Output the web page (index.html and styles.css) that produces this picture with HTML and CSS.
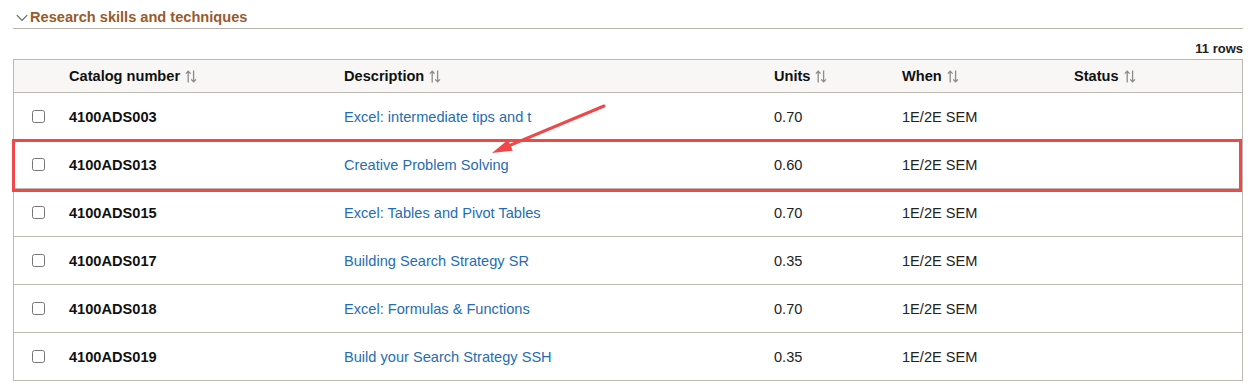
FILE: index.html
```html
<!DOCTYPE html>
<html lang="en">
<head>
<meta charset="utf-8">
<title>Research skills and techniques</title>
<link rel="stylesheet" href="styles.css">
</head>
<body>
<div class="page">
  <div class="section-head">
    <svg class="chev" width="12" height="8" viewBox="0 0 12 8"><polyline points="0.8,1.2 6,6.4 11.2,1.2" fill="none" stroke="#666" stroke-width="1.2"/></svg>
    <span class="section-title">Research skills and techniques</span>
  </div>
  <div class="rowcount">11 rows</div>
  <div class="table">
    <div class="row head">
      <div class="cell"></div>
      <div class="cell">Catalog number <svg class="sort" width="12" height="13" viewBox="0 0 12 13"><path d="M3.2 12.5V1.2M0.8 3.6L3.2 1.2L5.6 3.6M8.6 0.6V11.8M6.2 9.4L8.6 11.8L11 9.4" fill="none" stroke="#8c8c8c" stroke-width="1.3"/></svg></div>
      <div class="cell">Description <svg class="sort" width="12" height="13" viewBox="0 0 12 13"><path d="M3.2 12.5V1.2M0.8 3.6L3.2 1.2L5.6 3.6M8.6 0.6V11.8M6.2 9.4L8.6 11.8L11 9.4" fill="none" stroke="#8c8c8c" stroke-width="1.3"/></svg></div>
      <div class="cell">Units <svg class="sort" width="12" height="13" viewBox="0 0 12 13"><path d="M3.2 12.5V1.2M0.8 3.6L3.2 1.2L5.6 3.6M8.6 0.6V11.8M6.2 9.4L8.6 11.8L11 9.4" fill="none" stroke="#8c8c8c" stroke-width="1.3"/></svg></div>
      <div class="cell">When <svg class="sort" width="12" height="13" viewBox="0 0 12 13"><path d="M3.2 12.5V1.2M0.8 3.6L3.2 1.2L5.6 3.6M8.6 0.6V11.8M6.2 9.4L8.6 11.8L11 9.4" fill="none" stroke="#8c8c8c" stroke-width="1.3"/></svg></div>
      <div class="cell">Status <svg class="sort" width="12" height="13" viewBox="0 0 12 13"><path d="M3.2 12.5V1.2M0.8 3.6L3.2 1.2L5.6 3.6M8.6 0.6V11.8M6.2 9.4L8.6 11.8L11 9.4" fill="none" stroke="#8c8c8c" stroke-width="1.3"/></svg></div>
    </div>
    <div class="row">
      <div class="cell check"><input type="checkbox"></div>
      <div class="cell code">4100ADS003</div>
      <div class="cell"><a class="link" href="#">Excel: intermediate tips and t</a></div>
      <div class="cell">0.70</div>
      <div class="cell">1E/2E SEM</div>
      <div class="cell"></div>
    </div>
    <div class="row highlight">
      <div class="cell check"><input type="checkbox"></div>
      <div class="cell code">4100ADS013</div>
      <div class="cell"><a class="link" href="#">Creative Problem Solving</a></div>
      <div class="cell">0.60</div>
      <div class="cell">1E/2E SEM</div>
      <div class="cell"></div>
    </div>
    <div class="row">
      <div class="cell check"><input type="checkbox"></div>
      <div class="cell code">4100ADS015</div>
      <div class="cell"><a class="link" href="#">Excel: Tables and Pivot Tables</a></div>
      <div class="cell">0.70</div>
      <div class="cell">1E/2E SEM</div>
      <div class="cell"></div>
    </div>
    <div class="row">
      <div class="cell check"><input type="checkbox"></div>
      <div class="cell code">4100ADS017</div>
      <div class="cell"><a class="link" href="#">Building Search Strategy SR</a></div>
      <div class="cell">0.35</div>
      <div class="cell">1E/2E SEM</div>
      <div class="cell"></div>
    </div>
    <div class="row">
      <div class="cell check"><input type="checkbox"></div>
      <div class="cell code">4100ADS018</div>
      <div class="cell"><a class="link" href="#">Excel: Formulas &amp; Functions</a></div>
      <div class="cell">0.70</div>
      <div class="cell">1E/2E SEM</div>
      <div class="cell"></div>
    </div>
    <div class="row">
      <div class="cell check"><input type="checkbox"></div>
      <div class="cell code">4100ADS019</div>
      <div class="cell"><a class="link" href="#">Build your Search Strategy SSH</a></div>
      <div class="cell">0.35</div>
      <div class="cell">1E/2E SEM</div>
      <div class="cell"></div>
    </div>
  </div>
  <svg class="annot-arrow" width="1254" height="387" viewBox="0 0 1254 387">
    <line x1="604" y1="106" x2="505" y2="147.5" stroke="#f04848" stroke-width="3" stroke-linecap="round"/>
    <polygon points="492,153 512.7,150.8 508.1,139.8" fill="#f04848"/>
  </svg>
</div>
</body>
</html>
```
FILE: styles.css
```css
html, body {
  margin: 0;
  padding: 0;
  background: #ffffff;
}
body {
  font-family: "Liberation Sans", Arial, sans-serif;
  font-size: 14.6px;
  color: #222;
}
.page {
  position: relative;
  width: 1254px;
  height: 387px;
  padding: 0 11px 0 13px;
  box-sizing: border-box;
  overflow: hidden;
}
.section-head {
  display: flex;
  align-items: center;
  padding: 7px 0 1px 3px;
  line-height: 20px;
  border-bottom: 1px solid #b8b3ad;
}
.chev {
  display: block;
  margin-right: 2px;
  margin-top: 1px;
}
.section-title {
  font-weight: bold;
  color: #9a5a2c;
  font-size: 14.6px;
}
.rowcount {
  margin-top: 12px;
  margin-bottom: 2px;
  line-height: 16px;
  text-align: right;
  font-weight: bold;
  font-size: 13px;
  color: #222;
}
.table {
  border: 1px solid #bdb8b2;
  border-bottom: none;
}
.row {
  display: grid;
  grid-template-columns: 55px 275px 430px 128px 172px 1fr;
  height: 47px;
  align-items: center;
  border-bottom: 1px solid #bdb8b2;
  position: relative;
}
.row.head {
  height: 32px;
  background: #f8f7f5;
  font-weight: bold;
  color: #111;
}
.cell {
  display: flex;
  align-items: center;
  white-space: nowrap;
}
.sort {
  display: block;
  margin-left: 5px;
}
.check {
  padding-left: 18px;
}
.check input {
  margin: 0;
  width: 13px;
  height: 13px;
}
.code {
  font-weight: bold;
  color: #111;
}
.link {
  color: #1f6db4;
  text-decoration: none;
}
.highlight::after {
  content: "";
  position: absolute;
  top: -2px;
  left: -2px;
  right: 0;
  bottom: -4px;
  border: 3px solid #f04848;
  pointer-events: none;
}
.annot-arrow {
  position: absolute;
  left: 0;
  top: 0;
  pointer-events: none;
}
```
